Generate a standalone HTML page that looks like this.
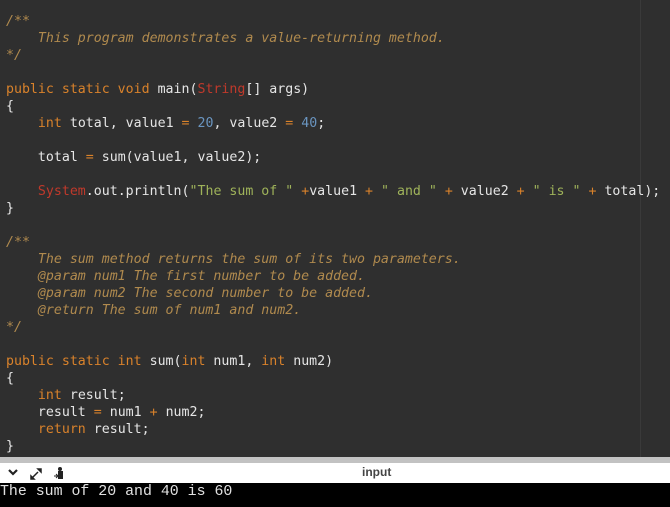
<!DOCTYPE html>
<html><head><style>
html,body{margin:0;padding:0;width:670px;height:507px;overflow:hidden;background:#2f2f2f}
#ed{position:absolute;left:0;top:0;width:670px;height:457px;background:#2f2f2f}
#ml{position:absolute;left:640px;top:0;width:1px;height:457px;background:#3a3a3a}
pre{position:absolute;left:6px;top:13px;margin:0;font-family:"DejaVu Sans Mono","Liberation Mono",monospace;font-size:13.25px;line-height:17px;color:#e6e6e6}
.c{color:#b08a4e;font-style:italic}
.k{color:#d9822b}
.n{color:#6a95c0}
.s{color:#9fb35a}
.r{color:#c0392b}
#gs{position:absolute;left:0;top:457px;width:670px;height:6px;background:#c2c2c2}
#wb{position:absolute;left:0;top:463px;width:670px;height:20px;background:#fff}
#wb .t{position:absolute;left:362px;top:2px;font:bold 12px "Liberation Sans",sans-serif;color:#444}
#out{position:absolute;left:0;top:483px;width:670px;height:24px;background:#000;color:#e0e0e0;font:14.9px "Liberation Mono",monospace;line-height:18px}
</style></head><body>
<div id="ed"><div id="ml"></div>
<pre><span class="c">/**
    This program demonstrates a value-returning method.
*/</span>

<span class="k">public static void</span> main(<span class="r">String</span>[] args)
{
    <span class="k">int</span> total, value1 <span class="k">=</span> <span class="n">20</span>, value2 <span class="k">=</span> <span class="n">40</span>;

    total <span class="k">=</span> sum(value1, value2);

    <span class="r">System</span>.out.println(<span class="s">"The sum of "</span> <span class="k">+</span>value1 <span class="k">+</span> <span class="s">" and "</span> <span class="k">+</span> value2 <span class="k">+</span> <span class="s">" is "</span> <span class="k">+</span> total);
}

<span class="c">/**
    The sum method returns the sum of its two parameters.
    @param num1 The first number to be added.
    @param num2 The second number to be added.
    @return The sum of num1 and num2.
*/</span>

<span class="k">public static int</span> sum(<span class="k">int</span> num1, <span class="k">int</span> num2)
{
    <span class="k">int</span> result;
    result <span class="k">=</span> num1 <span class="k">+</span> num2;
    <span class="k">return</span> result;
}</pre></div>
<div id="gs"></div>
<div id="wb">
<svg width="90" height="20" style="position:absolute;left:0;top:0">
<path d="M9 7 L13 11 L17 7" stroke="#222" stroke-width="2.2" fill="none"/>
<path d="M31 16 L36 11 M36 11 L38 9 M38 6 L41 6 L41 9 Z M31 16 L31 13 L34 16 Z" stroke="#222" stroke-width="1.5" fill="#222"/>
<rect x="58" y="8" width="5" height="8" fill="#222"/><circle cx="60" cy="6" r="2" fill="#222"/><path d="M54 13 L57 13 M56 11 L58 13 L56 15" stroke="#222" stroke-width="1" fill="none"/>
</svg>
<span class="t">input</span></div>
<div id="out">The sum of 20 and 40 is 60</div>
</body></html>
